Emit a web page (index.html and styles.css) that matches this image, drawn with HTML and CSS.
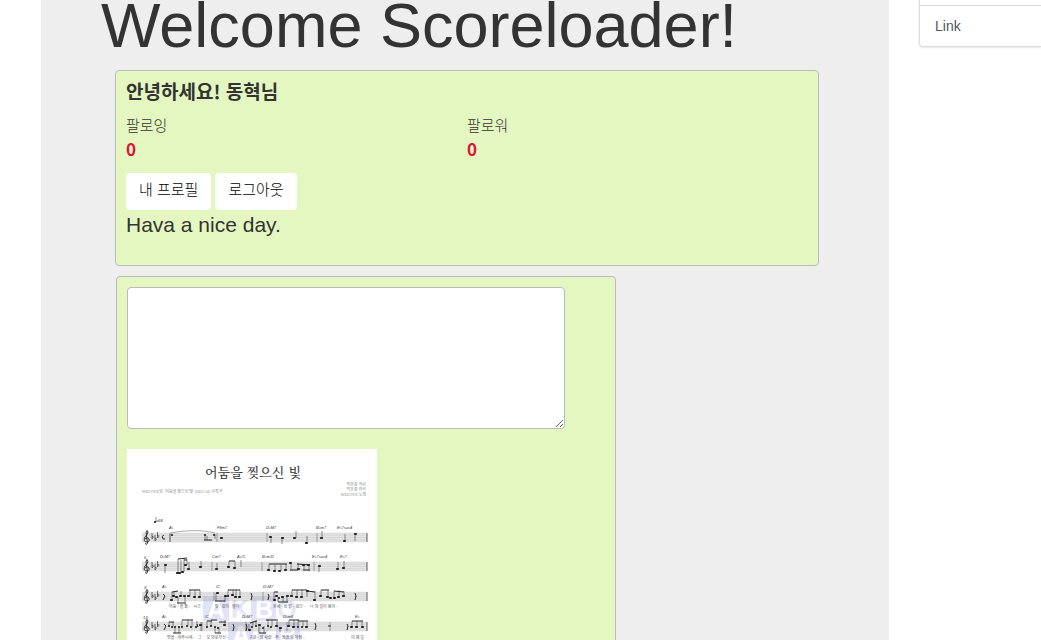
FILE: index.html
```html
<!DOCTYPE html>
<html lang="ko">
<head>
<meta charset="utf-8">
<meta name="viewport" content="width=device-width, initial-scale=1">
<title>Scoreloader</title>
<link rel="stylesheet" href="styles.css">
</head>
<body>
<div class="page">
  <main class="jumbotron">
    <h1 class="welcome">Welcome Scoreloader!</h1>
    <section class="card profile">
      <h2 class="greeting">안녕하세요! 동혁님</h2>
      <dl class="stats">
        <div><dt>팔로잉</dt><dd>0</dd></div>
        <div><dt>팔로워</dt><dd>0</dd></div>
      </dl>
      <div class="actions">
        <button class="btn" type="button">내 프로필</button>
        <button class="btn" type="button">로그아웃</button>
      </div>
      <p class="wish">Hava a nice day.</p>
    </section>
    <section class="card post">
      <textarea class="message" aria-label="글"></textarea>
      <svg class="score" viewBox="0 0 250 354" role="img" aria-label="어둠을 찢으신 빛">
        <rect width="250" height="354" fill="#fff"/>
        <g class="mark">
          <path d="M76 147h26v25h-26zM124 147h25v25h-25zM101 173h25v25h-25zM149 173h24v25h-24z" fill="#e2e2f8"/>
          <g font-size="25" font-weight="bold" text-anchor="middle">
            <text x="89" y="169" fill="#fff">A</text><text x="113" y="169" fill="#e6e6f8">K</text>
            <text x="137" y="169" fill="#fff">B</text><text x="160" y="169" fill="#e6e6f8">O</text>
            <text x="114" y="195" fill="#fff">A</text><text x="138" y="195" fill="#e6e6f8">K</text><text x="161" y="195" fill="#fff">B</text>
          </g>
        </g>
        <text class="title" x="126" y="28" text-anchor="middle">어둠을 찢으신 빛</text>
        <g class="tiny" fill="#888">
          <text x="15" y="44">WELOVE의 &#160;'어둠을 찢으신 빛' (2021.10) 수록곡</text>
          <g text-anchor="end"><text x="239" y="37">박은총 작사</text><text x="239" y="42">박은총 작곡</text><text x="239" y="47">WELOVE 노래</text></g>
        </g>
        <defs>
          <g id="staff">
            <path d="M15 0h225v9H15z" fill="#999" fill-opacity=".25"/>
            <path d="M15 0h225M15 2.200h225M15 4.500h225M15 6.800h225M15 9h225" stroke="#999" stroke-width=".2"/>
            <path d="M240 0v9" stroke="#333" stroke-width=".8"/>
            <path d="M18 10.500q2 2 2.500-.5L19-1q1-3 2 0 0 2-3 5-2 4 1 5 4 0 3-3-2-3-4 0" fill="none" stroke="#222" stroke-width=".9"/>
            <path d="M25 0v6q3-3 0-2.500M28 2v6q3-3 0-2.500M30.500-1v6q3-3 0-2.500" fill="none" stroke="#333" stroke-width=".7"/>
          </g>
        </defs>
        <use href="#staff" y="84"/><use href="#staff" y="113"/><use href="#staff" y="143"/><use href="#staff" y="173"/>
        <g class="chords">
          <text x="29" y="73">=68</text>
          <text x="42" y="80">A♭</text><text x="90" y="80">F♯m7</text><text x="139" y="80">D♭M7</text><text x="189" y="80">B♭m7</text><text x="210" y="80">E♭7sus4</text>
          <text x="33" y="109">D♭M7</text><text x="85" y="109">Cm7</text><text x="110" y="109">A♭/C</text><text x="135" y="109">B♭m11</text><text x="185" y="109">E♭7sus4</text><text x="213" y="109">E♭7</text>
          <text x="35" y="139">A♭</text><text x="89" y="139">/C</text><text x="136" y="139">D♭M7</text>
          <text x="35" y="169">A♭</text><text x="78" y="169">/C</text><text x="115" y="169">D♭M7</text><text x="156" y="169">D♭m6</text><text x="228" y="169">E♭</text>
          <text x="17" y="110">5</text><text x="17" y="140">9</text><text x="16" y="170">13</text>
        </g>
        <g class="tiny" fill="#555">
          <text x="42" y="159">어둠 - 을 뚫 - &#160; 시고 -</text><text x="88" y="159">빛 &#160; 깊이 &#160; 열어 -</text><text x="146" y="159">온세 - 상 밝 - 힘으 - &#160; &#160; 나 의 길이 됨이 -</text>
          <text x="40" y="190">땅을 - 비추시네 - &#160; 그 &#160; &#160; 오 의로우신 -</text><text x="122" y="190">구원 - 의 사랑 - 주 &#160; 영광 의 아침 -</text><text x="224" y="190">이 제 일</text>
        </g>
        <path class="bars" d="M43 84v9M90 84v9M140 84v9M190 84v9M85 113v9M135 113v9M187 113v9M87 143v9M136 143v9M75 173v9M119 173v9M160 173v9M203 173v9"/>
        <path class="stems" d="M29 68v5M43 85v8M78 86v5M80 87v4M88 85v5M144 88v6M155 89v6M169 89v-7M180 94v-7M195 89v-7M218 92v-7M228 85v7
          M38 117v7M51 124v-14M54 124v-13M57 123v-13M60 116v-6M62 119v-6M74 118v-6M90 120v-6M102 118v-6M108 119v-7M114 118v-7M142 121v-6M148 122v-6M154 122v-6M159 121v-6M164 115v6M171 120v-6M177 116v5M182 116v6M192 117v6M211 120v-7M217 119v-7
          M45 150v-7M47 147v-4M51 148v6M54 147v-5M58 147v6M63 147v-6M68 148v-7M73 148v-7M89 144v8M98 147v6M101 147v-6M106 146v-5M109 148v-7M113 148v-7M147 151v-8M151 148v5M156 148v5M160 147v6M165 147v-6M170 148v-7M175 148v-7M180 142v6M188 142v9M194 147v-6M201 148v-7M207 149v-7M212 148v-7M217 147v-5
          M42 177v-4M46 178v-5M48 178v6M52 178v6M55 178v-7M61 177v-6M65 178v-7M70 178v-6M74 173v9M80 178v-6M84 177v-6M88 178v6M92 178v6M98 176v-5M122 181v-6M126 177v-5M129 177v-6M132 177v7M137 177v7M141 177v-7M145 177v-6M150 177v-5M153 178v5M162 178v-7M167 178v-7M171 178v-7M176 178v-6M180 178v-6M225 178v-6M230 178v-6M235 178v-6"/>
        <path class="beams" d="M77 91h8M51 110l9-1M57 111h3M102 112h6M142 115h18M163 121h8M170 115l13 1M176 121h7M45 143l6-1M50 154h9M62 141h11M88 152h10M101 141h12M147 143h4M151 153h10M165 141h15M180 142l8 1M194 141h8M207 142l10 1
          M42 173h5M46 184h8M55 171h11M80 172h5M84 171h6M88 184h6M92 173h7M123 174l7-2M132 184h7M139 171h12M162 171h10M171 172h10M225 172h11"/>
        <path class="slur" d="M43 84q27-5 45 0"/>
        <path class="heads" d="M28 73h0M45 86h0M78 86h0M87 86h0M94 89h1M143 88h1M155 89h1M167 89h1M179 94h1M194 89h1M217 92h1M228 85h1
          M38 116h1M50 124h1M52 124h1M55 123h1M58 116h1M61 120h1M73 118h1M89 120h1M101 118h1M107 119h1M141 121h1M147 122h1M152 122h1M158 121h1M163 114h1M171 120h1M176 116h1M181 116h1M192 117h1M210 120h1M216 119h1
          M44 151h1M46 147h1M49 148h1M53 147h1M57 147h1M61 147h1M67 148h1M72 148h1M90 144h1M98 147h1M101 147h0M105 146h1M108 148h1M112 148h1M147 151h1M149 147h1M152 149h0M155 148h1M160 147h1M164 147h1M169 148h1M174 148h1M180 142h1M187 151h1M193 147h1M200 148h1M203 149h1M207 149h1M211 148h1M216 147h1
          M42 177h0M45 178h0M48 178h0M52 178h0M55 178h0M60 177h0M64 178h0M69 178h0M73 176h1M80 178h0M84 177h0M88 178h0M91 179h0M97 176h1M122 181h1M125 178h0M129 177h0M132 176h1M136 179h0M141 177h0M144 178h0M149 177h1M153 179h1M161 177h1M166 178h1M171 178h0M175 178h0M179 178h1M224 178h1M229 178h1M235 178h1"/>
        <path class="rests" d="M37 86q-3 1-1 4h2M36 145l2 2-2 4M124 144l1 3-1 4M141 145l1 2-1 4M228 144l1 3-1 4M37 175l2 2-2 4M70 175l1 3M106 175l1 3-1 4M119 175l1 3-1 4M188 174l1 3-1 4M201 177h3M220 175l1 2-1 4"/>
      </svg>
    </section>
  </main>
  <aside class="sidebar">
    <nav class="links">
      <a class="link" href="#">Link</a>
      <a class="link" href="#">Link</a>
    </nav>
  </aside>
</div>
</body>
</html>
```
FILE: styles.css
```css
* { box-sizing: border-box; }

body {
  height: 100vh;
  margin: 0;
  overflow: hidden;
  background: #fff;
  color: #333;
  font: 15px/20px "Liberation Sans", "Noto Sans CJK KR", sans-serif;
}

.page {
  display: grid;
  grid-template-columns: minmax(0, 848fr) minmax(0, 122fr);
  gap: 30px;
  padding-left: 41px;
}

.jumbotron {
  padding: 0 60px 48px;
  background: #eee;
}

.welcome {
  margin: -10px 0 10px;
  font-size: 63px;
  font-weight: 500;
  line-height: 70px;
}

.card {
  border: 1px solid #bbb;
  border-radius: 4px;
  padding: 10px;
  background: #e4f7c0;
}

.profile { margin: 0 10px 10px 14px; }

.greeting {
  margin: 0 0 15px;
  font: bold 19px/20px "Noto Sans CJK KR", sans-serif;
}

.stats {
  display: grid;
  grid-template-columns: 1fr 1fr;
  margin: 0 0 12px;
}

.stats dt { font-weight: 300; }

.stats dd {
  margin: 0;
  color: #dc143c;
  font: bold 17px/25px "Noto Sans CJK KR", sans-serif;
}

.actions {
  display: flex;
  gap: 4px;
}

.btn {
  height: 37px;
  padding: 0 13px 5px;
  border: 0;
  border-radius: 4px;
  background: #fff;
  color: #000;
  font: 300 15px/20px "Noto Sans CJK KR", sans-serif;
}

.wish {
  margin: 0 0 15px;
  font-size: 21px;
  line-height: 30px;
}

.post {
  max-width: 500px;
  margin-left: 15px;
}

.message {
  display: block;
  width: 438px;
  max-width: 100%;
  height: 142px;
  margin-bottom: 20px;
  border: 1px solid #bbb;
  border-radius: 4px;
  background: #fff;
}

.score {
  display: block;
  width: 250px;
  max-width: 100%;
}

.title {
  fill: #333;
  font: 500 13px "Noto Serif CJK KR", "Noto Sans CJK KR", serif;
}

.tiny { font: 4px "Liberation Serif", "Noto Sans CJK KR", serif; }
.chords { fill: #333; font: italic 4px "Liberation Sans", "DejaVu Sans", sans-serif; }
.mark { font-family: "Liberation Sans", sans-serif; }

.bars, .stems, .beams, .slur, .heads, .rests { fill: none; stroke: #222; }
.bars { stroke: #555; stroke-width: .5; }
.stems { stroke-width: .5; }
.beams { stroke-width: 1; }
.slur { stroke: #777; stroke-width: .6; }
.heads { stroke-linecap: round; stroke-width: 2.2; }
.rests { stroke-width: 1; }

.links {
  margin-top: -36px;
  border: 1px solid #ddd;
  border-right: 0;
  border-radius: 4px 0 0 4px;
  box-shadow: 0 1px 2px rgba(0, 0, 0, .1);
}

.link {
  display: block;
  padding: 10px 15px;
  color: #555;
  font-size: 14px;
  text-decoration: none;
}

.link + .link { border-top: 1px solid #ddd; }
```
